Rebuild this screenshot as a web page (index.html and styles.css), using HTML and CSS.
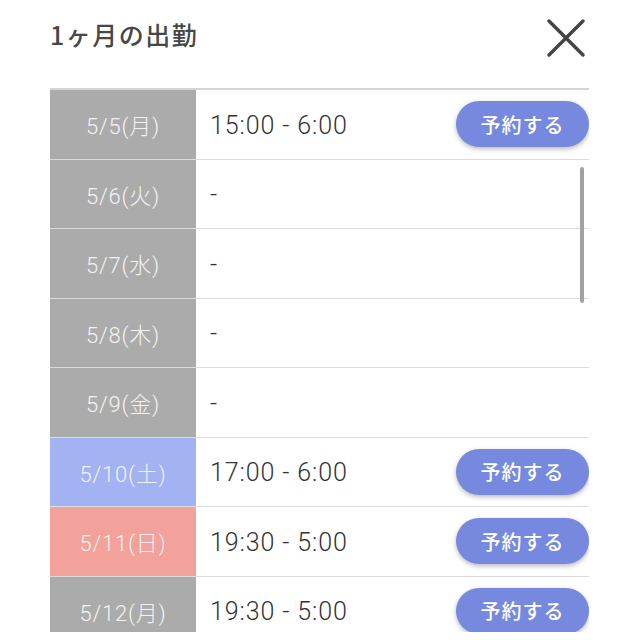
FILE: index.html
```html
<!DOCTYPE html>
<html lang="ja">
<head>
<meta charset="utf-8">
<link rel="stylesheet" href="styles.css">
</head>
<body>
<div class="modal">
  <header class="head">
    <h1 class="title">1ヶ月の出勤</h1>
    <button class="close" aria-label="閉じる">
      <svg width="38" height="38" viewBox="0 0 38 38"><path d="M2 2 L36 36 M36 2 L2 36" stroke="#444" stroke-width="3.4" stroke-linecap="round" fill="none"/></svg>
    </button>
  </header>
  <div class="scroller">
    <div class="list">
      <div class="row"><div class="date">5/5(月)</div><div class="time">15:00 - 6:00</div><button class="btn">予約する</button></div>
      <div class="row"><div class="date">5/6(火)</div><div class="time">-</div></div>
      <div class="row"><div class="date">5/7(水)</div><div class="time">-</div></div>
      <div class="row"><div class="date">5/8(木)</div><div class="time">-</div></div>
      <div class="row"><div class="date">5/9(金)</div><div class="time">-</div></div>
      <div class="row"><div class="date sat">5/10(土)</div><div class="time">17:00 - 6:00</div><button class="btn">予約する</button></div>
      <div class="row"><div class="date sun">5/11(日)</div><div class="time">19:30 - 5:00</div><button class="btn">予約する</button></div>
      <div class="row"><div class="date">5/12(月)</div><div class="time">19:30 - 5:00</div><button class="btn">予約する</button></div>
      <div class="row"><div class="date">5/13(火)</div><div class="time">-</div></div>
    </div>
    <div class="scrollbar"></div>
  </div>
</div>
</body>
</html>
```
FILE: styles.css
```css
html, body {
  margin: 0;
  padding: 0;
  background: #fff;
}
body {
  font-family: "Noto Sans CJK JP", "Noto Sans", sans-serif;
  color: #333;
}
.modal {
  width: 640px;
  height: 640px;
  box-sizing: border-box;
  padding: 0 51px 0 50px;
  display: flex;
  flex-direction: column;
}
.head {
  height: 88px;
  display: flex;
  align-items: flex-start;
  justify-content: space-between;
}
.title {
  margin: 18px 0 0 0;
  font-size: 25px;
  line-height: 32px;
  font-weight: 500;
  letter-spacing: 1.5px;
  color: #474747;
}
.close {
  margin: 19px 4px 0 0;
  padding: 0;
  border: 0;
  background: none;
  width: 38px;
  height: 38px;
}
.scroller {
  position: relative;
  height: 542px;
  overflow: hidden;
  border-top: 2px solid #d4d4d4;
}
.list {
  display: flex;
  flex-direction: column;
}
.row {
  height: 69.5px;
  box-sizing: border-box;
  border-bottom: 1px solid #dcdcdc;
  display: flex;
  align-items: center;
}
.date {
  width: 146px;
  align-self: stretch;
  flex: none;
  background: #ababab;
  color: #f2f2f2;
  font-family: Roboto, "Noto Sans CJK JP", sans-serif;
  font-size: 22px;
  font-weight: 300;
  letter-spacing: 0.8px;
  display: flex;
  align-items: center;
  justify-content: center;
}
.date.sat { background: #a3b2f2; }
.date.sun { background: #f2a19b; }
.time {
  flex: 1;
  padding: 2px 0 0 14px;
  font-family: Roboto, "Noto Sans CJK JP", sans-serif;
  font-size: 25px;
  font-weight: 300;
  letter-spacing: 0.9px;
  color: #333;
}
.btn {
  width: 133px;
  height: 46px;
  border: 0;
  border-radius: 23px;
  background: #7689de;
  color: #fff;
  font-family: "Noto Sans CJK JP", sans-serif;
  font-size: 20px;
  font-weight: 500;
  letter-spacing: 1px;
  box-shadow: 0 2px 5px rgba(0,0,0,0.28);
  padding: 0;
}
.scrollbar {
  position: absolute;
  right: 5px;
  top: 77px;
  width: 4px;
  height: 136px;
  border-radius: 2px;
  background: #a2a2a2;
}
```
